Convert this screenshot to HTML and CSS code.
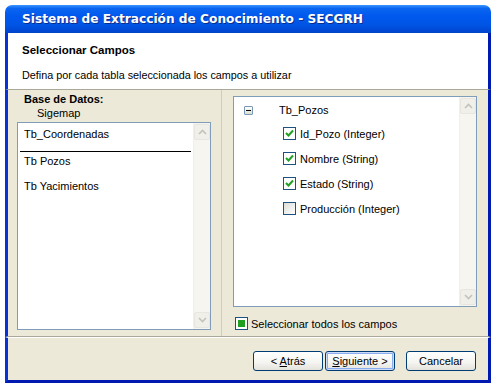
FILE: index.html
```html
<!DOCTYPE html>
<html lang="es">
<head>
  <meta charset="UTF-8" />
  <title>Sistema de Extracción de Conocimiento - SECGRH</title>
  <link rel="stylesheet" href="styles.css">
</head>
<body>
  <div class="window">
    <div class="titlebar">Sistema de Extracción de Conocimiento - SECGRH</div>

    <div class="header">
      <div class="header-title">Seleccionar Campos</div>
      <div class="header-text">Defina por cada tabla seleccionada los campos a utilizar</div>
    </div>

    <div class="content">
      <div class="left-pane">
        <div class="db-label">Base de Datos:</div>
        <div class="db-name">Sigemap</div>
        <div class="listbox tables">
          <div class="list-items">
            <div class="table-item">Tb_Coordenadas</div>
            <div class="table-item focused">Tb Pozos</div>
            <div class="table-item">Tb Yacimientos</div>
          </div>
          <div class="scrollbar">
            <div class="scroll-btn">
              <svg width="9" height="6" viewBox="0 0 9 6"><path d="M1 5 L4.5 1.5 L8 5" fill="none" stroke="#c3c3bb" stroke-width="1.6"/></svg>
            </div>
            <div class="scroll-track"></div>
            <div class="scroll-btn">
              <svg width="9" height="6" viewBox="0 0 9 6"><path d="M1 1 L4.5 4.5 L8 1" fill="none" stroke="#c3c3bb" stroke-width="1.6"/></svg>
            </div>
          </div>
        </div>
      </div>

      <div class="right-pane">
        <div class="listbox fields">
          <div class="list-items tree">
            <div class="tree-root">
              <span class="expander"><span class="minus"></span></span>
              <span>Tb_Pozos</span>
            </div>
            <div class="field">
              <span class="check checked">
                <svg width="9" height="9" viewBox="0 0 9 9"><path d="M1 4 L3.5 6.5 L8 1.5" fill="none" stroke="#21a121" stroke-width="2"/></svg>
              </span>
              <span>Id_Pozo (Integer)</span>
            </div>
            <div class="field">
              <span class="check checked">
                <svg width="9" height="9" viewBox="0 0 9 9"><path d="M1 4 L3.5 6.5 L8 1.5" fill="none" stroke="#21a121" stroke-width="2"/></svg>
              </span>
              <span>Nombre (String)</span>
            </div>
            <div class="field">
              <span class="check checked">
                <svg width="9" height="9" viewBox="0 0 9 9"><path d="M1 4 L3.5 6.5 L8 1.5" fill="none" stroke="#21a121" stroke-width="2"/></svg>
              </span>
              <span>Estado (String)</span>
            </div>
            <div class="field">
              <span class="check"></span>
              <span>Producción (Integer)</span>
            </div>
          </div>
          <div class="scrollbar">
            <div class="scroll-btn">
              <svg width="9" height="6" viewBox="0 0 9 6"><path d="M1 5 L4.5 1.5 L8 5" fill="none" stroke="#c3c3bb" stroke-width="1.6"/></svg>
            </div>
            <div class="scroll-track"></div>
            <div class="scroll-btn">
              <svg width="9" height="6" viewBox="0 0 9 6"><path d="M1 1 L4.5 4.5 L8 1" fill="none" stroke="#c3c3bb" stroke-width="1.6"/></svg>
            </div>
          </div>
        </div>
        <div class="select-all">
          <span class="check mixed"><span class="fill"></span></span>
          <span>Seleccionar todos los campos</span>
        </div>
      </div>
    </div>

    <div class="footer">
      <button class="btn"><span>&lt; <u>A</u>trás</span></button>
      <button class="btn default"><span><u>S</u>iguiente &gt;</span></button>
      <button class="btn cancel"><span>Cancelar</span></button>
    </div>
  </div>
</body>
</html>
```

FILE: styles.css
```css
:root {
  --xp-face: #ece9d8;
  --xp-blue: #0831d9;
  --xp-list-border: #7f9db9;
  --xp-check-border: #1c5180;
}

body {
  margin: 0;
  background: #ffffff;
  font-family: "Liberation Sans", Arial, sans-serif;
  font-size: 11px;
  color: #000;
}

.window {
  margin: 5px 0 0 5px;
  width: 486px;
  height: 378px;
  display: flex;
  flex-direction: column;
  box-sizing: border-box;
}

.titlebar {
  height: 28px;
  flex: none;
  padding-left: 17px;
  display: flex;
  align-items: center;
  border-radius: 7px 7px 0 0;
  background: linear-gradient(180deg, #3d95ff 0%, #0a66f0 12%, #0058ee 40%, #0055e5 70%, #0049d6 90%, #0043c8 100%);
  color: #fff;
  font-family: "DejaVu Sans", Verdana, sans-serif;
  font-size: 12.2px;
  font-weight: bold;
  text-shadow: 1px 1px 0 #0a2d8c;
}

.header {
  flex: none;
  height: 57px;
  background: #fff;
  border-left: 3px solid var(--xp-blue);
  border-right: 3px solid #0019b0;
  padding: 11px 0 0 14px;
  box-sizing: border-box;
  border-bottom: 1px solid #aca899;
}

.header-title {
  font-weight: bold;
  font-size: 11.5px;
}

.header-text {
  margin-top: 13px;
  font-size: 10.8px;
}

.content {
  flex: none;
  height: 247px;
  display: flex;
  background: var(--xp-face);
  border-left: 3px solid var(--xp-blue);
  border-right: 3px solid #0019b0;
  border-bottom: 1px solid #aca899;
  box-sizing: border-box;
}

.left-pane {
  width: 214px;
  flex: none;
  border-right: 1px solid #d0cdbd;
  padding: 3px 0 0 9px;
  box-sizing: border-box;
}

.db-label {
  font-weight: bold;
  padding-left: 7px;
  line-height: 13px;
}

.db-name {
  padding-left: 20px;
  line-height: 14px;
  margin-bottom: 2px;
}

.listbox {
  display: flex;
  background: #fff;
  border: 1px solid var(--xp-list-border);
  box-sizing: border-box;
}

.tables {
  width: 194px;
  height: 208px;
}

.list-items {
  flex: 1;
}

.tables .list-items {
  padding: 2px 2px 0 2px;
}

.table-item {
  height: 27px;
  line-height: 18px;
  padding-left: 4px;
  box-sizing: border-box;
}

.table-item.focused {
  border-top: 1px solid #000;
  margin-top: -1px;
  height: 26px;
}

.scrollbar {
  width: 16px;
  flex: none;
  display: flex;
  flex-direction: column;
  background: #f6f5ef;
  border-left: 1px solid #f0efe8;
}

.scroll-track {
  flex: 1;
}

.scroll-btn {
  height: 16px;
  margin: 1px 0;
  border: 1px solid #e8e6de;
  border-radius: 2px;
  background: #f0efe9;
  display: flex;
  align-items: center;
  justify-content: center;
  box-sizing: border-box;
}

.right-pane {
  flex: 1;
  padding: 6px 0 0 11px;
  display: flex;
  flex-direction: column;
}

.fields {
  width: 244px;
  height: 211px;
}

.tree {
  padding: 6px 0 0 10px;
}

.tree-root {
  display: flex;
  align-items: center;
  height: 14px;
}

.expander {
  width: 9px;
  height: 9px;
  border: 1px solid #7898b5;
  border-radius: 1px;
  background: linear-gradient(180deg, #fff, #dcdcd0);
  box-sizing: border-box;
  display: flex;
  align-items: center;
  justify-content: center;
  margin-right: 26px;
}

.minus {
  width: 5px;
  height: 1px;
  background: #000;
}

.field {
  display: flex;
  align-items: center;
  height: 13px;
  margin-top: 10px;
  padding-left: 39px;
}

.field + .field {
  margin-top: 12px;
}

.check {
  width: 13px;
  height: 13px;
  border: 1px solid var(--xp-check-border);
  background: linear-gradient(135deg, #dcdcd7, #ffffff);
  box-sizing: border-box;
  display: flex;
  align-items: center;
  justify-content: center;
  margin-right: 4px;
  flex: none;
}

.check.checked {
  background: #fff;
}

.select-all {
  display: flex;
  align-items: center;
  margin-top: 10px;
  padding-left: 2px;
}

.check.mixed {
  background: #fff;
  margin-right: 3px;
}

.check.mixed .fill {
  width: 7px;
  height: 7px;
  background: #1f9e1f;
}

.footer {
  flex: 1;
  display: flex;
  justify-content: flex-end;
  align-items: flex-start;
  padding: 13px 12px 0 0;
  background: var(--xp-face);
  border-top: 1px solid #fff;
  border-left: 3px solid var(--xp-blue);
  border-right: 3px solid #0019b0;
  border-bottom: 3px solid #0019b0;
  box-sizing: border-box;
}

.btn {
  width: 70px;
  height: 20px;
  margin: 0;
  padding: 0;
  border: 1px solid #003c74;
  border-radius: 3px;
  background: linear-gradient(180deg, #ffffff 0%, #f4f4f0 60%, #e3e2da 100%);
  font-family: "Liberation Sans", Arial, sans-serif;
  font-size: 11px;
  color: #000;
}

.btn + .btn {
  margin-left: 2px;
}

.btn.cancel {
  margin-left: 11px;
}

.btn.default {
  box-shadow: inset 0 0 0 1px #ceddf5, inset 0 0 0 2px #89adf0;
}

.btn u {
  text-decoration: underline;
}
```
